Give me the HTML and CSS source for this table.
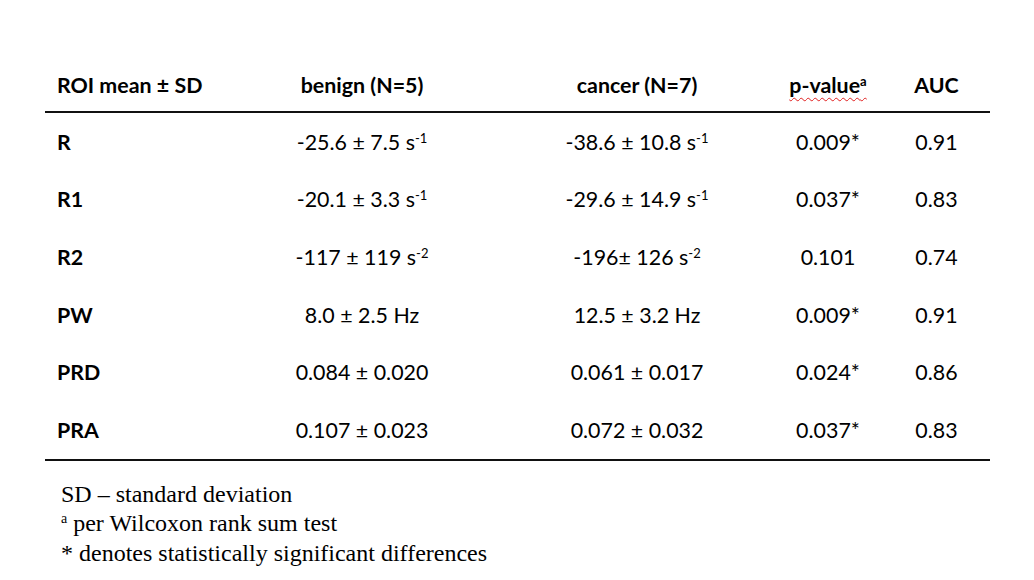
FILE: index.html
```html
<!DOCTYPE html>
<html>
<head>
<meta charset="utf-8">
<link rel="stylesheet" href="styles.css">
</head>
<body>
<div class="page">
  <div class="table">
    <div class="row head">
      <div class="c c1">ROI mean ± SD</div>
      <div class="c">benign (N=5)</div>
      <div class="c">cancer (N=7)</div>
      <div class="c"><span class="spell">p-value<sup class="fa">a</sup></span></div>
      <div class="c">AUC</div>
    </div>
    <div class="row">
      <div class="c c1">R</div>
      <div class="c">-25.6 ± 7.5 s<sup>-1</sup></div>
      <div class="c">-38.6 ± 10.8 s<sup>-1</sup></div>
      <div class="c">0.009*</div>
      <div class="c">0.91</div>
    </div>
    <div class="row">
      <div class="c c1">R1</div>
      <div class="c">-20.1 ± 3.3 s<sup>-1</sup></div>
      <div class="c">-29.6 ± 14.9 s<sup>-1</sup></div>
      <div class="c">0.037*</div>
      <div class="c">0.83</div>
    </div>
    <div class="row">
      <div class="c c1">R2</div>
      <div class="c">-117 ± 119 s<sup>-2</sup></div>
      <div class="c">-196± 126 s<sup>-2</sup></div>
      <div class="c">0.101</div>
      <div class="c">0.74</div>
    </div>
    <div class="row">
      <div class="c c1">PW</div>
      <div class="c">8.0 ± 2.5 Hz</div>
      <div class="c">12.5 ± 3.2 Hz</div>
      <div class="c">0.009*</div>
      <div class="c">0.91</div>
    </div>
    <div class="row">
      <div class="c c1">PRD</div>
      <div class="c">0.084 ± 0.020</div>
      <div class="c">0.061 ± 0.017</div>
      <div class="c">0.024*</div>
      <div class="c">0.86</div>
    </div>
    <div class="row">
      <div class="c c1">PRA</div>
      <div class="c">0.107 ± 0.023</div>
      <div class="c">0.072 ± 0.032</div>
      <div class="c">0.037*</div>
      <div class="c">0.83</div>
    </div>
  </div>
  <div class="notes">
    <div>SD – standard deviation</div>
    <div><sup class="na">a</sup> per Wilcoxon rank sum test</div>
    <div>* denotes statistically significant differences</div>
  </div>
</div>
</body>
</html>
```
FILE: styles.css
```css
html, body {
  margin: 0;
  padding: 0;
  background: #ffffff;
}
.page {
  width: 1034px;
  height: 580px;
  padding-top: 59px;
  box-sizing: border-box;
  color: #000;
}
.table {
  margin-left: 45px;
  width: 945px;
  font-family: Lato, "Open Sans", sans-serif;
  font-size: 21.4px;
  border-bottom: 2px solid #111;
}
.row {
  display: grid;
  grid-template-columns: 178px 278px 272px 110px 107px;
  height: 57.6px;
  align-items: center;
}
.row.head {
  height: 52px;
  font-weight: 700;
  border-bottom: 2px solid #111;
}
.row:not(.head) .c1 {
  font-weight: 700;
}
.c {
  text-align: center;
  white-space: nowrap;
}
.c1 {
  text-align: left;
  padding-left: 12px;
}
sup {
  font-size: 13px;
  line-height: 0;
  vertical-align: 7px;
}
.fa {
  font-size: 13px;
  font-weight: 700;
  vertical-align: 7px;
}
.spell {
  text-decoration: underline wavy #e02020 1px;
  text-underline-offset: 4px;
  text-decoration-skip-ink: none;
}
.notes {
  margin-top: 19px;
  margin-left: 61px;
  font-family: "Liberation Serif", "Times New Roman", serif;
  font-size: 24px;
  line-height: 29.5px;
}
.na {
  font-size: 14px;
  vertical-align: 8px;
}
```
